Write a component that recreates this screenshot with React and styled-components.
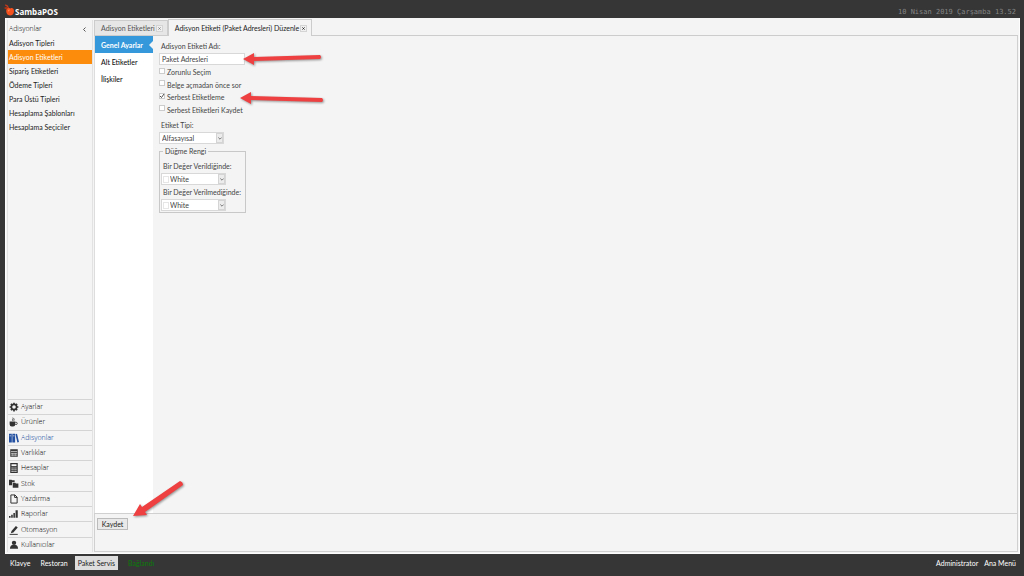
import React, { useState } from 'react';
import styled, { createGlobalStyle, css } from 'styled-components';

const GlobalStyle = createGlobalStyle`
    *, *::before, *::after {
        box-sizing: border-box;
    }

    body {
        margin: 0;
        background: #363636;
    }

    body, button, input, select {
        font-family: Lato, 'Open Sans', sans-serif;
        font-size: 7px;
        line-height: 10px;
        color: #222;
    }

    button, input, select {
        margin: 0;
        padding: 0;
        border: 0;
        border-radius: 0;
        background: none;
    }
`;

const Page = styled.div`
    position: relative;
    display: flex;
    flex-direction: column;
    min-height: 100vh;
`;

const TopBar = styled.header`
    display: flex;
    align-items: center;
    justify-content: space-between;
    height: 18px;
    padding: 5px 8px 0 4px;
`;

const Brand = styled.div`
    display: flex;
    align-items: center;
    font-family: 'Open Sans', sans-serif;
    font-size: 8px;
    font-weight: 700;
    color: #fff;

    svg {
        width: 11px;
        height: 12px;
        margin-top: -4px;
    }
`;

const Clock = styled.time`
    font-family: 'DejaVu Sans Mono', monospace;
    font-size: 7px;
    color: #858585;
`;

const Window = styled.div`
    flex: 1;
    display: flex;
    gap: 1px;
    margin: 0 4px 0 5px;
    padding: 2px 1px 1px;
    background: #f4f4f4;
    border: 1px solid #fdfdfd;
    border-top: 0;
`;

const Sidebar = styled.aside`
    display: flex;
    flex-direction: column;
    width: 86px;
    border-left: 1px solid #e2e2e2;
    border-right: 1px solid #e2e2e2;
`;

const SidebarTitle = styled.div`
    display: flex;
    align-items: center;
    justify-content: space-between;
    height: 16px;
    padding: 2px 6px 0 1px;
    font-family: 'Open Sans', sans-serif;
    font-weight: 300;
    color: #000;

    svg {
        width: 3px;
        height: 5px;
    }
`;

const SidebarList = styled.nav`
    flex: 1;
    display: flex;
    flex-direction: column;
`;

const SidebarItem = styled.button`
    height: 14px;
    padding-left: 1px;
    text-align: left;
    white-space: nowrap;

    ${(props) => props.$active && css`
        background: #fb8c0c;
        color: #fff;
    `}
`;

const Modules = styled.nav`
    display: flex;
    flex-direction: column;
    height: 153px;
`;

const ModuleButton = styled.button`
    flex: 1;
    display: flex;
    align-items: center;
    gap: 2px;
    padding-left: 1px;
    border-top: 1px solid #d4d4d4;
    font-family: 'Open Sans', sans-serif;
    font-weight: 300;
    color: ${(props) => (props.$active ? '#003a96' : '#000')};

    svg {
        width: 10px;
        height: 10px;
        color: ${(props) => (props.$active ? '#2350a0' : '#333')};
    }
`;

const Main = styled.main`
    flex: 1;
    display: flex;
    flex-direction: column;
    min-width: 0;
`;

const Tabs = styled.div`
    display: flex;
    align-items: flex-end;
    height: 16px;
    border-bottom: 1px solid #ccc;
`;

const Tab = styled.div`
    display: flex;
    align-items: center;
    gap: 1px;
    height: ${(props) => (props.$active ? '17px' : '15px')};
    padding: 0 4px 0 6px;
    margin-bottom: ${(props) => (props.$active ? '-1px' : '0')};
    border: 1px solid #ccc;
    border-bottom: 0;
    background: ${(props) => (props.$active ? '#f4f4f4' : '#e6e6e6')};
`;

const TabLabel = styled.button`
    color: ${(props) => (props.$active ? '#222' : '#555')};
    white-space: nowrap;
`;

const CloseButton = styled.button`
    display: flex;
    align-items: center;
    justify-content: center;
    width: 7px;
    height: 7px;
    border: 1px solid #d4d4d4;
    background: #f0f0f0;
    color: ${(props) => (props.$active ? '#111' : '#777')};

    svg {
        width: 3px;
        height: 3px;
    }
`;

const Editor = styled.div`
    flex: 1;
    display: flex;
    border-right: 1px solid #d0d0d0;
    border-left: 1px solid #ddd;
`;

const Sections = styled.nav`
    display: flex;
    flex-direction: column;
    width: 58px;
    background: #fff;
`;

const SectionButton = styled.button`
    display: flex;
    align-items: center;
    justify-content: space-between;
    height: 17px;
    padding-left: 6px;
    color: #111;
    font-weight: 500;
    white-space: nowrap;

    ${(props) => props.$active && css`
        background: #3498db;
        color: #fff;
        font-weight: 700;
    `}

    svg {
        width: 4px;
        height: 8px;
    }
`;

const Form = styled.form`
    display: flex;
    flex-direction: column;
    align-items: flex-start;
    padding: 5px 6px;
    color: #444;
`;

const Label = styled.label`
    padding: 0 2px;
    white-space: nowrap;
    color: #444;
`;

const TextInput = styled.input`
    width: 86px;
    height: 12px;
    margin: 2px 0 1px;
    padding: 0 2px;
    border: 1px solid #d8d8d8;
    background: #fff;
    color: #444;
`;

const Checks = styled.div`
    display: grid;
    grid-template-rows: repeat(4, 1fr);
    height: 50px;
    margin-bottom: 4px;
`;

const CheckLabel = styled.label`
    display: flex;
    align-items: center;
    gap: 2px;
    color: #444;
`;

const CheckBox = styled.span`
    position: relative;
    display: flex;
    margin-bottom: 3px;

    input {
        appearance: none;
        width: 6px;
        height: 6px;
        border: 1px solid #ccc;
        background: #fff;
    }

    svg {
        position: absolute;
        inset: 0;
        width: 6px;
        height: 6px;
        display: none;
        pointer-events: none;
    }

    input:checked + svg {
        display: block;
    }
`;

const SelectBox = styled.div`
    position: relative;
    display: flex;
    align-items: center;
    width: 65px;
    height: 12px;
    margin-top: 2px;
    border: 1px solid #d8d8d8;
    background: #fff;

    select {
        appearance: none;
        width: 100%;
        height: 10px;
        padding-left: ${(props) => (props.$swatch ? '8px' : '2px')};
        color: #444;
    }
`;

const Swatch = styled.span`
    position: absolute;
    left: 1px;
    width: 6px;
    height: 7px;
    border: 1px solid #e6e6e6;
    background: #fff;
    pointer-events: none;
`;

const SelectArrow = styled.span`
    position: absolute;
    right: 0;
    display: flex;
    align-items: center;
    justify-content: center;
    width: 7px;
    height: 10px;
    border: 1px solid #d4d4d4;
    background: #ececec;
    color: #777;
    pointer-events: none;

    svg {
        width: 4px;
        height: 3px;
    }
`;

const Group = styled.fieldset`
    display: flex;
    flex-direction: column;
    width: 87px;
    min-width: 0;
    margin: 2px 0 0;
    padding: 5px 1px 1px;
    border: 1px solid #c8c8c8;

    legend {
        margin-left: 2px;
        padding: 0 2px;
    }
`;

const GroupField = styled.div`
    display: flex;
    flex-direction: column;
    margin-bottom: 2px;

    &:last-child {
        margin-bottom: 0;
    }
`;

const Actions = styled.div`
    height: 39px;
    padding: 4px 2px;
    border: 1px solid #d0d0d0;
`;

const SaveButton = styled.button`
    width: 31px;
    height: 12px;
    border: 1px solid #bbb;
    background: #e9e9e9;
`;

const BottomBar = styled.footer`
    display: flex;
    align-items: center;
    justify-content: space-between;
    height: 22px;
    padding: 0 5px 4px 7px;
`;

const BarGroup = styled.div`
    display: flex;
    align-items: center;
    gap: ${(props) => props.$gap};
`;

const BarButton = styled.button`
    height: 14px;
    padding: 0 3px;
    color: #fff;
    white-space: nowrap;

    ${(props) => props.$active && css`
        background: #ddd;
        color: #222;
    `}
`;

const Status = styled.span`
    padding-left: 6px;
    color: #0a7d0a;
`;

// annotation arrows float over the whole screen
const Arrows = styled.svg`
    position: absolute;
    top: 0;
    left: 0;
    width: 340px;
    height: 530px;
    pointer-events: none;
    filter: drop-shadow(1px 1px 1px rgba(0, 0, 0, 0.4));
`;

const icons = {
    gear: (
        <>
            <circle cx="8" cy="8" r="4.2" fill="none" stroke="currentColor" strokeWidth="2.6" />
            <path d="M8 1v3M8 12v3M1 8h3M12 8h3M3 3l2 2M11 11l2 2M13 3l-2 2M5 11l-2 2" stroke="currentColor" strokeWidth="2.6" />
        </>
    ),
    cup: (
        <>
            <path d="M1 7h9v4.500a3.500 3.500 0 0 1-3.500 3.500h-2A3.500 3.500 0 0 1 1 11.500z" />
            <path d="M10 8.500h1.500a1.500 1.500 0 0 1 0 3.500H10" fill="none" stroke="currentColor" strokeWidth="1.300" />
            <path d="M6 6c-2-2 2-2.500 0-5M8 6c-1-1.500 1-2 0-3.500" fill="none" stroke="currentColor" strokeWidth="1.300" />
        </>
    ),
    books: (
        <>
            <path d="M0 1h4.500v14H0zM5.300 1h4.500v14H5.300z" />
            <path d="M10.300 1.800l2.500-.8 3.200 13.200-2.600.8z" />
            <path d="M1 4.500h2.500M6.300 4.500h2.500" stroke="#f4f4f4" />
        </>
    ),
    table: (
        <>
            <path d="M2 2h12v12H2z" />
            <path d="M3 5.500h10M3 8.500h10M3 11.300h10" stroke="#f4f4f4" strokeWidth="1.100" />
            <path d="M6 8v5M10 8v5" stroke="#f4f4f4" strokeWidth=".7" />
        </>
    ),
    calculator: (
        <>
            <path d="M2 0h12v16H2z" />
            <path d="M4 2h8v3H4z" fill="#f4f4f4" />
            <path d="M4 8h8M4 10.800h8M4 13.500h8" stroke="#f4f4f4" strokeWidth="1.500" strokeDasharray="2 1" />
        </>
    ),
    boxes: (
        <>
            <path d="M0 1h4l1 1h4v8H0z" />
            <path d="M5 5h11v10H5z" fill="#f4f4f4" />
            <path d="M6 6h4l1 1h4v7H6z" />
        </>
    ),
    page: <path d="M3 1.500h6.500L13 5v9.500H3zM9 1.500V5.500h4" fill="none" stroke="currentColor" strokeWidth="1.600" />,
    bars: <path d="M0 11h2.500v3H0zM3.500 9H6v5H3.500zM7 6.500h2.500V14H7zM10.500 2H14v12h-3.500z" />,
    pen: (
        <>
            <path d="M4 9.500L11 1.500l3 2.500-7 8-4 1.200z" />
            <path d="M1 15h13" stroke="currentColor" strokeWidth="1.500" />
        </>
    ),
    user: (
        <>
            <circle cx="8" cy="4.500" r="3.500" />
            <path d="M1.500 14c0-4 2-5.500 4-6h5c2 .5 4 2 4 6z" />
        </>
    ),
};

function Icon({ name }) {
    return <svg viewBox="0 0 16 16" fill="currentColor" aria-hidden="true">{icons[name]}</svg>;
}

const listItems = [
    'Adisyon Tipleri',
    'Adisyon Etiketleri',
    'Sipariş Etiketleri',
    'Ödeme Tipleri',
    'Para Üstü Tipleri',
    'Hesaplama Şablonları',
    'Hesaplama Seçiciler',
];

const modules = [
    { label: 'Ayarlar', icon: 'gear' },
    { label: 'Ürünler', icon: 'cup' },
    { label: 'Adisyonlar', icon: 'books' },
    { label: 'Varlıklar', icon: 'table' },
    { label: 'Hesaplar', icon: 'calculator' },
    { label: 'Stok', icon: 'boxes' },
    { label: 'Yazdırma', icon: 'page' },
    { label: 'Raporlar', icon: 'bars' },
    { label: 'Otomasyon', icon: 'pen' },
    { label: 'Kullanıcılar', icon: 'user' },
];

const sections = ['Genel Ayarlar', 'Alt Etiketler', 'İlişkiler'];

const checks = [
    { label: 'Zorunlu Seçim' },
    { label: 'Belge açmadan önce sor' },
    { label: 'Serbest Etiketleme', checked: true },
    { label: 'Serbest Etiketleri Kaydet' },
];

function Close({ active, label }) {
    return (
        <CloseButton $active={active} aria-label={label}>
            <svg viewBox="0 0 4 4" stroke="currentColor"><path d="M.5 .5l3 3M3.500 .5l-3 3" /></svg>
        </CloseButton>
    );
}

function Select({ id, value, swatch }) {
    return (
        <SelectBox $swatch={swatch}>
            {swatch && <Swatch />}
            <select id={id} defaultValue={value}>
                <option>{value}</option>
            </select>
            <SelectArrow>
                <svg viewBox="0 0 4 3" fill="none" stroke="currentColor"><path d="M.3 .5L2 2.200 3.700 .5" /></svg>
            </SelectArrow>
        </SelectBox>
    );
}

function App() {
    const [section, setSection] = useState('Genel Ayarlar');
    const [item, setItem] = useState('Adisyon Etiketleri');

    return (
        <Page>
            <GlobalStyle />
            <TopBar>
                <Brand>
                    <svg viewBox="0 0 22 24" aria-hidden="true">
                        <path d="M2 1c4 0 7 2 8 7l-2 1C7 6 5 4 2 3z" fill="#c33b1c" />
                        <path d="M0 8c3-3 7-2 9 1l-1 2C5 11 2 11 0 8z" fill="#a83216" />
                        <path d="M5 11c3-4 7-3 8-2 3-2 7 0 7 5 0 6-4 9-8 9-5 0-9-6-7-12z" fill="#f4511e" />
                        <path d="M8 12c2-2 4-1 4 0s-3 1-4 4z" fill="#ff8a50" />
                    </svg>
                    SambaPOS
                </Brand>
                <Clock dateTime="2019-04-10T13:52">10 Nisan 2019 Çarşamba 13.52</Clock>
            </TopBar>

            <Window>
                <Sidebar>
                    <SidebarTitle>
                        Adisyonlar
                        <svg viewBox="0 0 3 5" fill="none" stroke="#555"><path d="M2.500 .5l-2 2 2 2" /></svg>
                    </SidebarTitle>
                    <SidebarList>
                        {listItems.map((name) => (
                            <SidebarItem key={name} $active={name === item} onClick={() => setItem(name)}>{name}</SidebarItem>
                        ))}
                    </SidebarList>
                    <Modules>
                        {modules.map(({ label, icon }) => (
                            <ModuleButton key={label} $active={label === 'Adisyonlar'}>
                                <Icon name={icon} />
                                {label}
                            </ModuleButton>
                        ))}
                    </Modules>
                </Sidebar>

                <Main>
                    <Tabs>
                        <Tab>
                            <TabLabel>Adisyon Etiketleri</TabLabel>
                            <Close label="Kapat" />
                        </Tab>
                        <Tab $active>
                            <TabLabel $active>Adisyon Etiketi (Paket Adresleri) Düzenle</TabLabel>
                            <Close active label="Kapat" />
                        </Tab>
                    </Tabs>

                    <Editor>
                        <Sections>
                            {sections.map((name) => (
                                <SectionButton key={name} $active={name === section} onClick={() => setSection(name)}>
                                    {name}
                                    {name === section && <svg viewBox="0 0 4 8" fill="#f4f4f4"><path d="M4 0v8L0 4z" /></svg>}
                                </SectionButton>
                            ))}
                        </Sections>

                        <Form onSubmit={(e) => e.preventDefault()}>
                            <Label htmlFor="name">Adisyon Etiketi Adı:</Label>
                            <TextInput id="name" defaultValue="Paket Adresleri" />
                            <Checks>
                                {checks.map(({ label, checked }) => (
                                    <CheckLabel key={label}>
                                        <CheckBox>
                                            <input type="checkbox" defaultChecked={checked} />
                                            <svg viewBox="0 0 6 6" fill="none" stroke="#222" strokeWidth=".8"><path d="M1 3l1.500 1.500L5 1" /></svg>
                                        </CheckBox>
                                        {label}
                                    </CheckLabel>
                                ))}
                            </Checks>
                            <Label htmlFor="type">Etiket Tipi:</Label>
                            <Select id="type" value="Alfasayısal" />
                            <Group>
                                <legend>Düğme Rengi</legend>
                                <GroupField>
                                    <Label htmlFor="filled">Bir Değer Verildiğinde:</Label>
                                    <Select id="filled" value="White" swatch />
                                </GroupField>
                                <GroupField>
                                    <Label htmlFor="empty">Bir Değer Verilmediğinde:</Label>
                                    <Select id="empty" value="White" swatch />
                                </GroupField>
                            </Group>
                        </Form>
                    </Editor>

                    <Actions>
                        <SaveButton>Kaydet</SaveButton>
                    </Actions>
                </Main>
            </Window>

            <BottomBar>
                <BarGroup $gap="4px">
                    <BarButton>Klavye</BarButton>
                    <BarButton>Restoran</BarButton>
                    <BarButton $active>Paket Servis</BarButton>
                    <Status>Bağlandı</Status>
                </BarGroup>
                <BarGroup $gap="0">
                    <BarButton>Administrator</BarButton>
                    <BarButton>Ana Menü</BarButton>
                </BarGroup>
            </BottomBar>

            <Arrows viewBox="0 0 340 530" fill="#ee4040" aria-hidden="true">
                <path d="M243 59l11-6v4l66-2q2 2 0 4l-66 2v4z" />
                <path d="M240 98l11-6v4l71 2q2 2 0 4l-71-2v4z" />
                <path d="M133 516l7-12 2 3 38-26q3 1 3 4l-38 27 2 3z" />
            </Arrows>
        </Page>
    );
}

export default App;
